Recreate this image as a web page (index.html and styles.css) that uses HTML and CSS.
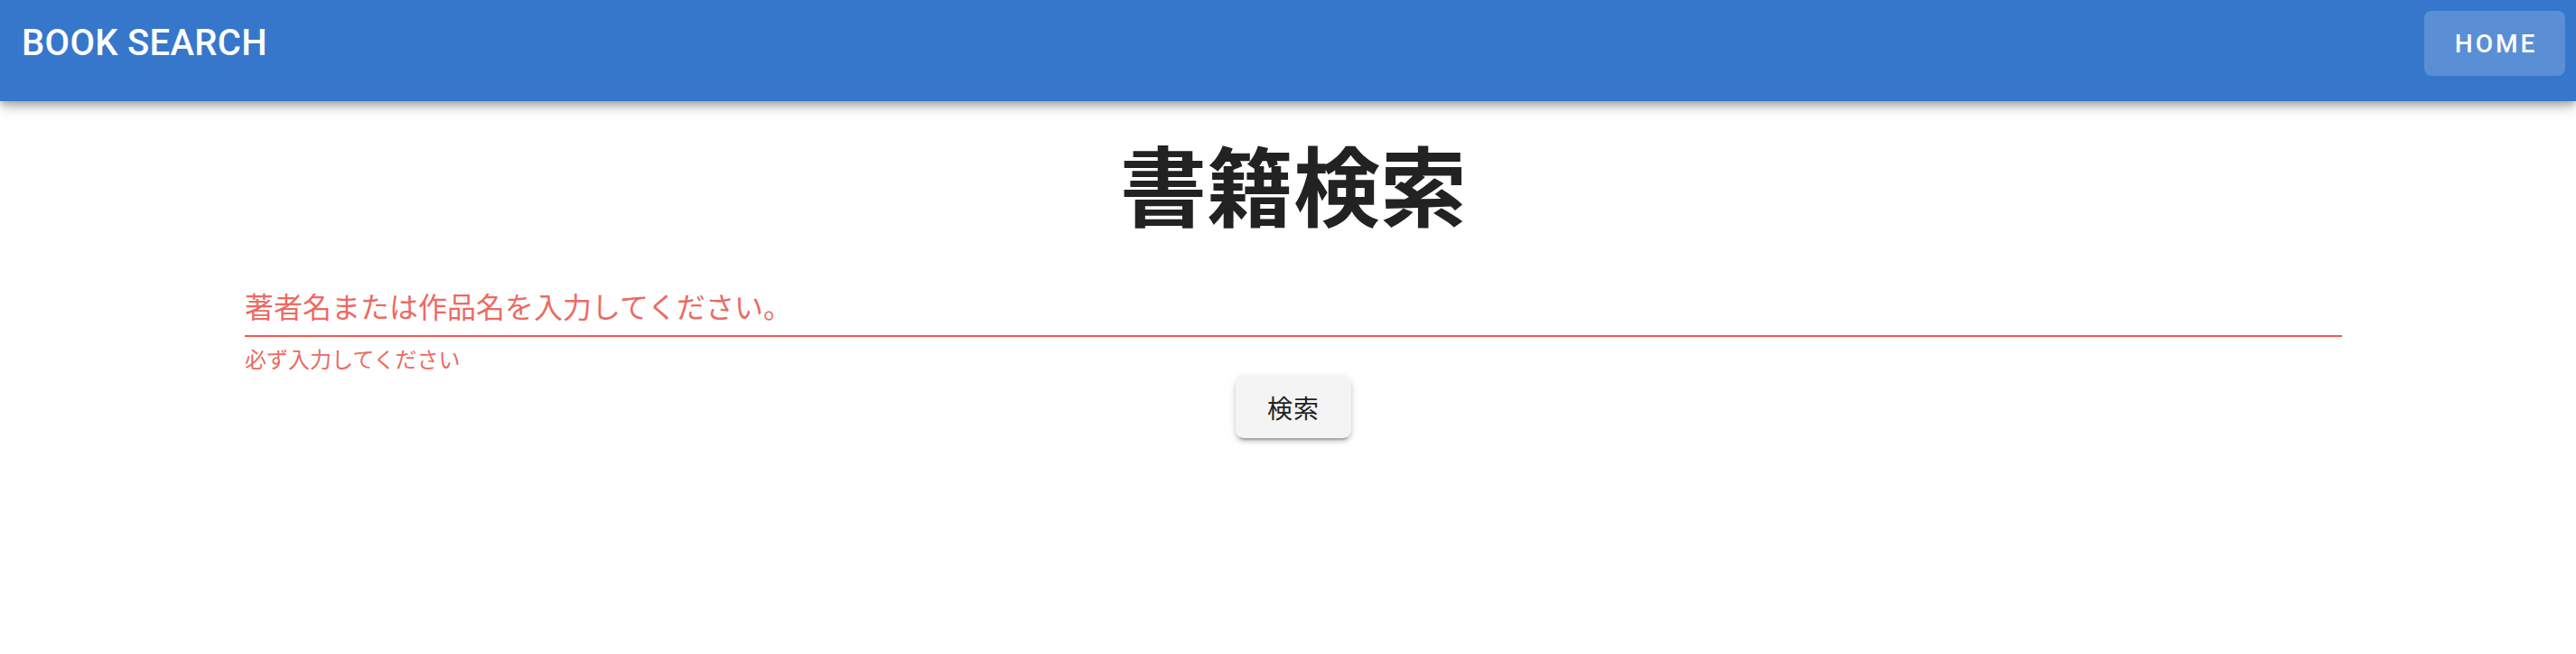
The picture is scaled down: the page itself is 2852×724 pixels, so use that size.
FILE: index.html
```html
<!DOCTYPE html>
<html lang="ja">
<head>
<meta charset="utf-8">
<title>Book Search</title>
<link rel="stylesheet" href="styles.css">
</head>
<body>
<header class="appbar">
  <div class="toolbar">
    <div class="brand">BOOK SEARCH</div>
    <button class="home-btn">HOME</button>
  </div>
</header>
<main class="content">
  <h1 class="title">書籍検索</h1>
  <div class="field">
    <div class="input-wrap">
      <input class="input" type="text" placeholder="著者名または作品名を入力してください。">
    </div>
    <p class="helper">必ず入力してください</p>
  </div>
  <div class="actions">
    <button class="search-btn">検索</button>
  </div>
</main>
</body>
</html>
```

FILE: styles.css
```css
* { box-sizing: border-box; }
html, body { margin: 0; padding: 0; background: #fff; }
body {
  font-family: Roboto, "Noto Sans CJK JP", sans-serif;
  width: 2852px;
  height: 724px;
  overflow: hidden;
}
.appbar {
  height: 112px;
  background: #3677cc;
  box-shadow: 0 4px 8px -2px rgba(0,0,0,0.25), 0 8px 10px 0 rgba(0,0,0,0.14), 0 2px 20px 0 rgba(0,0,0,0.10);
  position: relative;
  z-index: 1;
}
.toolbar {
  height: 96px;
  display: flex;
  align-items: center;
  justify-content: space-between;
  padding: 0 12px 0 24px;
}
.brand {
  font-family: Roboto, sans-serif;
  font-weight: 500;
  font-size: 40px;
  line-height: 48px;
  color: #fff;
  letter-spacing: 0.3px;
}
.home-btn {
  height: 72px;
  width: 156px;
  border: none;
  border-radius: 8px;
  background: rgba(255,255,255,0.18);
  color: #fff;
  font-family: Roboto, sans-serif;
  font-weight: 500;
  font-size: 28px;
  letter-spacing: 3px;
  padding: 0 0 0 3px;
}
.content {
  margin: 0 259px 0 271px;
}
.title {
  margin: 32px 0 0 0;
  text-align: center;
  font-family: "Noto Sans CJK JP", sans-serif;
  font-weight: 700;
  font-size: 96px;
  line-height: 116px;
  color: #222;
}
.field {
  margin-top: 58px;
}
.input-wrap {
  border-bottom: 2px solid #f0584e;
  padding-bottom: 13px;
}
.input {
  display: block;
  width: 100%;
  border: none;
  outline: none;
  padding: 0;
  margin: 0;
  height: 40px;
  line-height: 40px;
  font-family: "Noto Sans CJK JP", sans-serif;
  font-size: 32px;
  background: transparent;
}
.input::placeholder {
  color: #ec6a62;
  opacity: 1;
}
.helper {
  margin: 8px 0 0 0;
  font-family: "Noto Sans CJK JP", sans-serif;
  font-size: 24px;
  line-height: 32px;
  color: #ec6a62;
}
.actions {
  display: flex;
  justify-content: center;
  margin-top: 3px;
}
.search-btn {
  height: 69px;
  width: 128px;
  border: none;
  border-radius: 9px;
  background: #f4f4f4;
  color: #222;
  font-family: "Noto Sans CJK JP", sans-serif;
  font-size: 28px;
  letter-spacing: 1px;
  box-shadow: 0 6px 2px -4px rgba(0,0,0,0.2), 0 4px 4px 0 rgba(0,0,0,0.14), 0 2px 10px 0 rgba(0,0,0,0.12);
}
```
